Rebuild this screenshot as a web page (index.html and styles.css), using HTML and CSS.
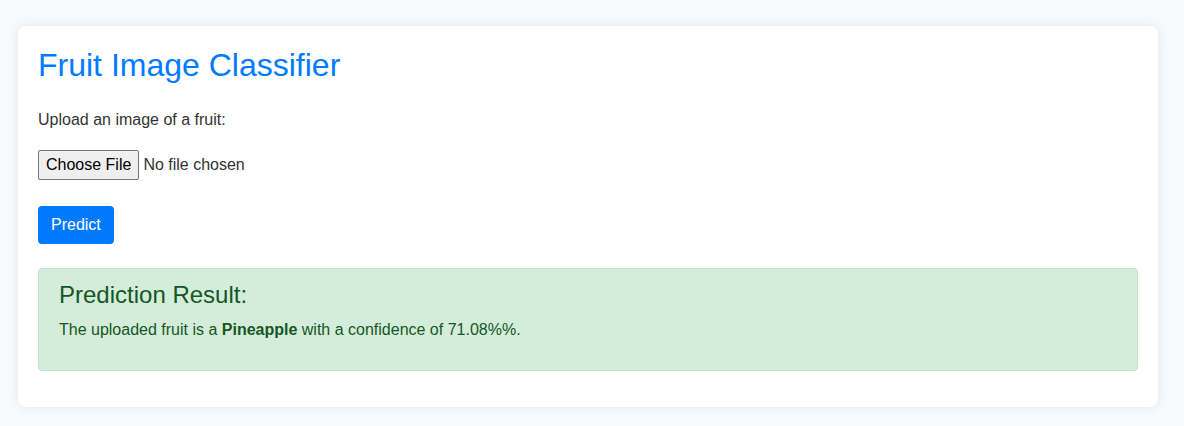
FILE: index.html
```html
<!DOCTYPE html>
<html lang="en">
<head>
<meta charset="utf-8">
<title>Fruit Image Classifier</title>
<link rel="stylesheet" href="styles.css">
</head>
<body>
<main class="card">
  <h1 class="title">Fruit Image Classifier</h1>
  <form class="upload-form">
    <label class="upload-label" for="file">Upload an image of a fruit:</label>
    <div class="file-row">
      <input class="file-input" type="file" id="file" name="file">
    </div>
    <button class="predict-btn" type="button">Predict</button>
  </form>
  <section class="alert">
    <h2 class="alert-title">Prediction Result:</h2>
    <p class="alert-text">The uploaded fruit is a <strong>Pineapple</strong> with a confidence of 71.08%%.</p>
  </section>
</main>
</body>
</html>
```
FILE: styles.css
```css
html, body {
  margin: 0;
  background: #f8f9fa;
}
body {
  padding: 26px 26px 19px 18px;
  font-family: "Liberation Sans", Arial, sans-serif;
  color: #333;
  font-size: 16px;
  line-height: normal;
}
.card {
  background: #fff;
  border-radius: 8px;
  box-shadow: 0 0 10px rgba(0, 0, 0, 0.08);
  padding: 21px 20px 20px 20px;
}
.title {
  margin: 0 0 27px 0;
  font-size: 32px;
  font-weight: normal;
  color: #007bff;
  line-height: normal;
}
.upload-form {
  margin: 0;
}
.upload-label {
  display: block;
  margin: 0 0 21px 0;
  color: #333;
}
.file-row {
  height: 30px;
  margin-bottom: 26px;
}
.file-input {
  font-family: "Liberation Sans", Arial, sans-serif;
  font-size: 16px;
  color: #333;
  height: 30px;
  padding: 0;
  margin: 0;
}
.file-input::file-selector-button {
  font-family: "Liberation Sans", Arial, sans-serif;
  font-size: 16px;
  color: #000;
  background: #efefef;
  border: 1px solid #767676;
  border-radius: 2px;
  height: 30px;
  padding: 0 7px;
  margin: 0 4px 0 0;
}
.predict-btn {
  display: block;
  font-family: "Liberation Sans", Arial, sans-serif;
  font-size: 16px;
  line-height: normal;
  color: #fff;
  background: #007bff;
  border: none;
  border-radius: 4px;
  padding: 10px 13px;
  margin: 0 0 24px 0;
  height: 38px;
}
.alert {
  background: #d4edda;
  border: 1px solid #c3e6cb;
  border-radius: 4px;
  color: #155724;
  padding: 12px 20px 15px 20px;
  margin-bottom: 16px;
}
.alert-title {
  margin: 0 0 12px 0;
  font-size: 24px;
  font-weight: normal;
  line-height: normal;
}
.alert-text {
  margin: 0 0 16px 0;
}
```
